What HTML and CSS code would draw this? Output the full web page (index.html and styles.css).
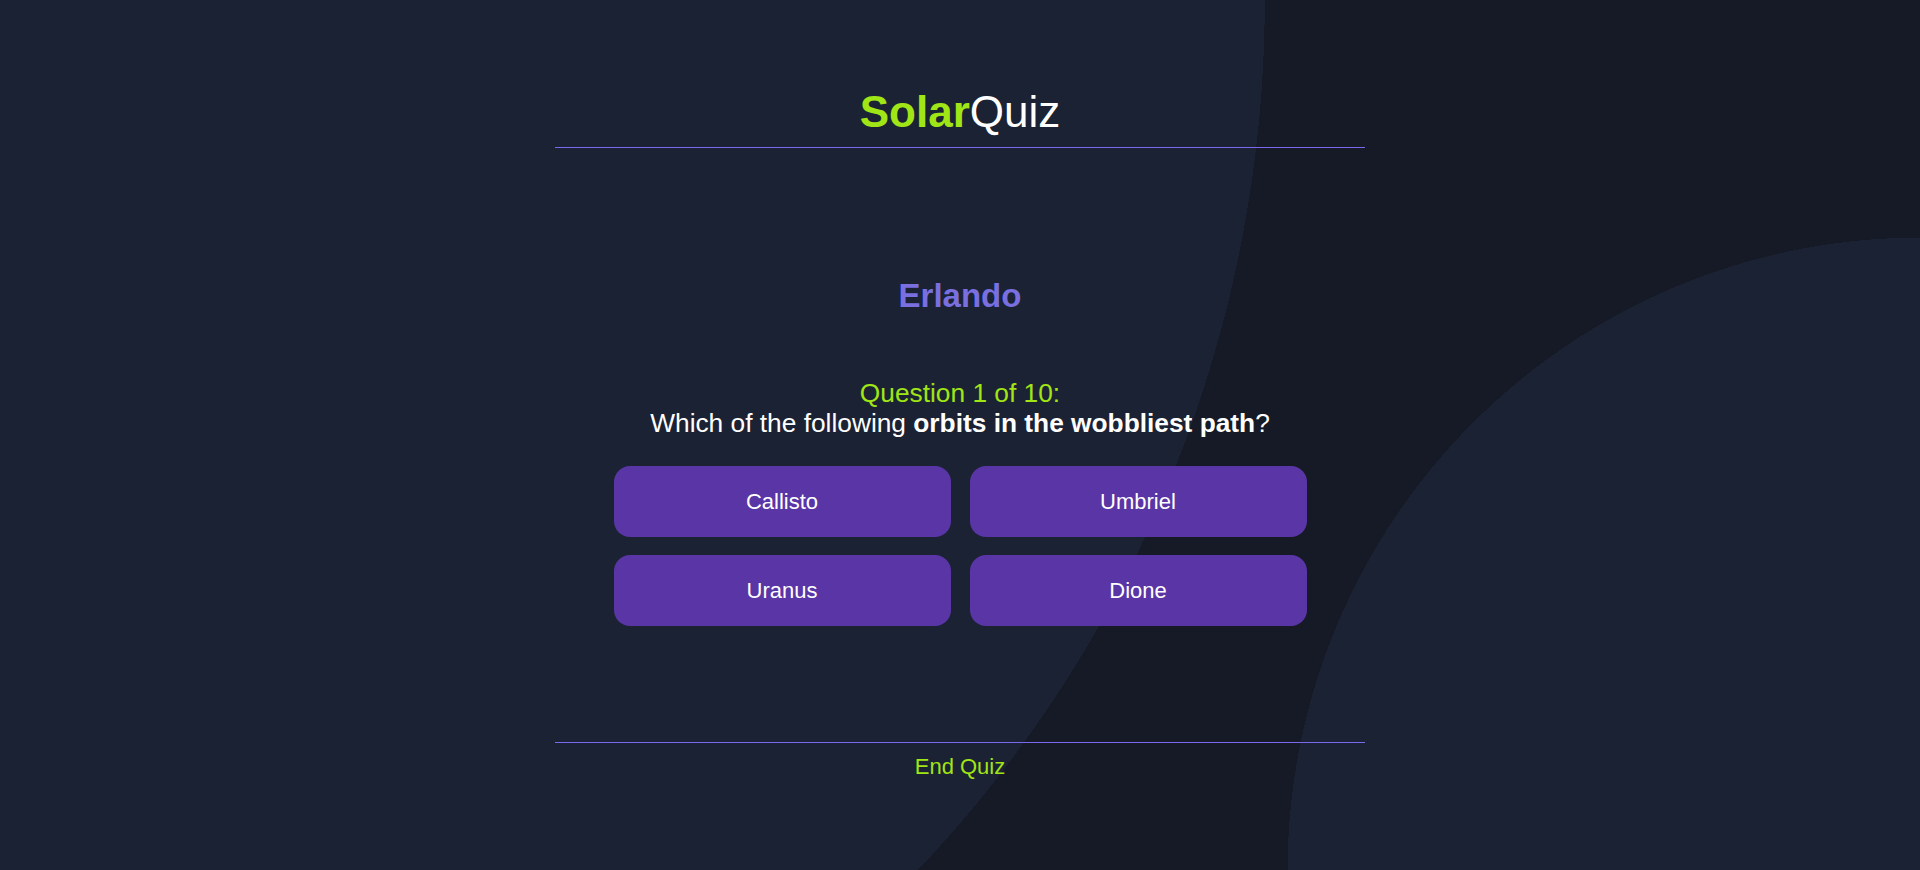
FILE: index.html
```html
<!DOCTYPE html>
<html lang="en">
<head>
<meta charset="utf-8">
<title>SolarQuiz</title>
<link rel="stylesheet" href="styles.css">
</head>
<body>
<main class="quiz">
  <header class="quiz-header">
    <h1 class="logo"><span class="logo-solar">Solar</span>Quiz</h1>
  </header>
  <section class="quiz-body">
    <h2 class="player">Erlando</h2>
    <p class="question"><span class="question-count">Question 1 of 10:</span><br>Which of the following <strong>orbits in the wobbliest path</strong>?</p>
    <div class="answers">
      <button class="answer">Callisto</button>
      <button class="answer">Umbriel</button>
      <button class="answer">Uranus</button>
      <button class="answer">Dione</button>
    </div>
  </section>
  <footer class="quiz-footer">
    <button class="end-quiz">End Quiz</button>
  </footer>
</main>
</body>
</html>
```

FILE: styles.css
```css
html, body {
  height: 100%;
}

body {
  margin: 0;
  min-height: 870px;
  font-family: "Liberation Sans", Arial, sans-serif;
  color: #ffffff;
  background:
    radial-gradient(circle at bottom right, #1b2234 30%, rgba(27, 34, 52, 0) 30%),
    radial-gradient(circle at top left, #1b2234 60%, #151a26 60%);
  background-repeat: no-repeat;
  background-size: 100% 100%;
}

.quiz {
  width: 810px;
  margin: 0 auto;
  padding-top: 88px;
  text-align: center;
}

.logo {
  margin: 0;
  font-size: 44px;
  line-height: 48px;
  font-weight: 400;
  padding-bottom: 11px;
  border-bottom: 1px solid #7b68ee;
  color: #ffffff;
}

.logo-solar {
  color: #a0e515;
  font-weight: 700;
}

.quiz-body {
  display: flex;
  flex-direction: column;
  align-items: center;
}

.player {
  margin: 129px 0 0;
  font-size: 33px;
  line-height: 38px;
  font-weight: 700;
  color: #7a6fdf;
}

.question {
  margin: 63px 0 0;
  font-size: 26.3px;
  line-height: 30px;
  color: #ffffff;
}

.question-count {
  color: #a0e515;
}

.question strong {
  font-weight: 700;
}

.answers {
  margin-top: 28px;
  display: grid;
  grid-template-columns: 337px 337px;
  grid-auto-rows: 71px;
  column-gap: 19px;
  row-gap: 18px;
}

.answer {
  border: none;
  border-radius: 16px;
  background: #5a35a6;
  color: #ffffff;
  font-family: "Liberation Sans", Arial, sans-serif;
  font-size: 22px;
  padding: 0;
  cursor: pointer;
}

.quiz-footer {
  margin-top: 116px;
  border-top: 1px solid #7b68ee;
  padding-top: 11px;
}

.end-quiz {
  border: none;
  background: none;
  padding: 0;
  color: #a0e515;
  font-family: "Liberation Sans", Arial, sans-serif;
  font-size: 22px;
  line-height: 25px;
  cursor: pointer;
}
```
